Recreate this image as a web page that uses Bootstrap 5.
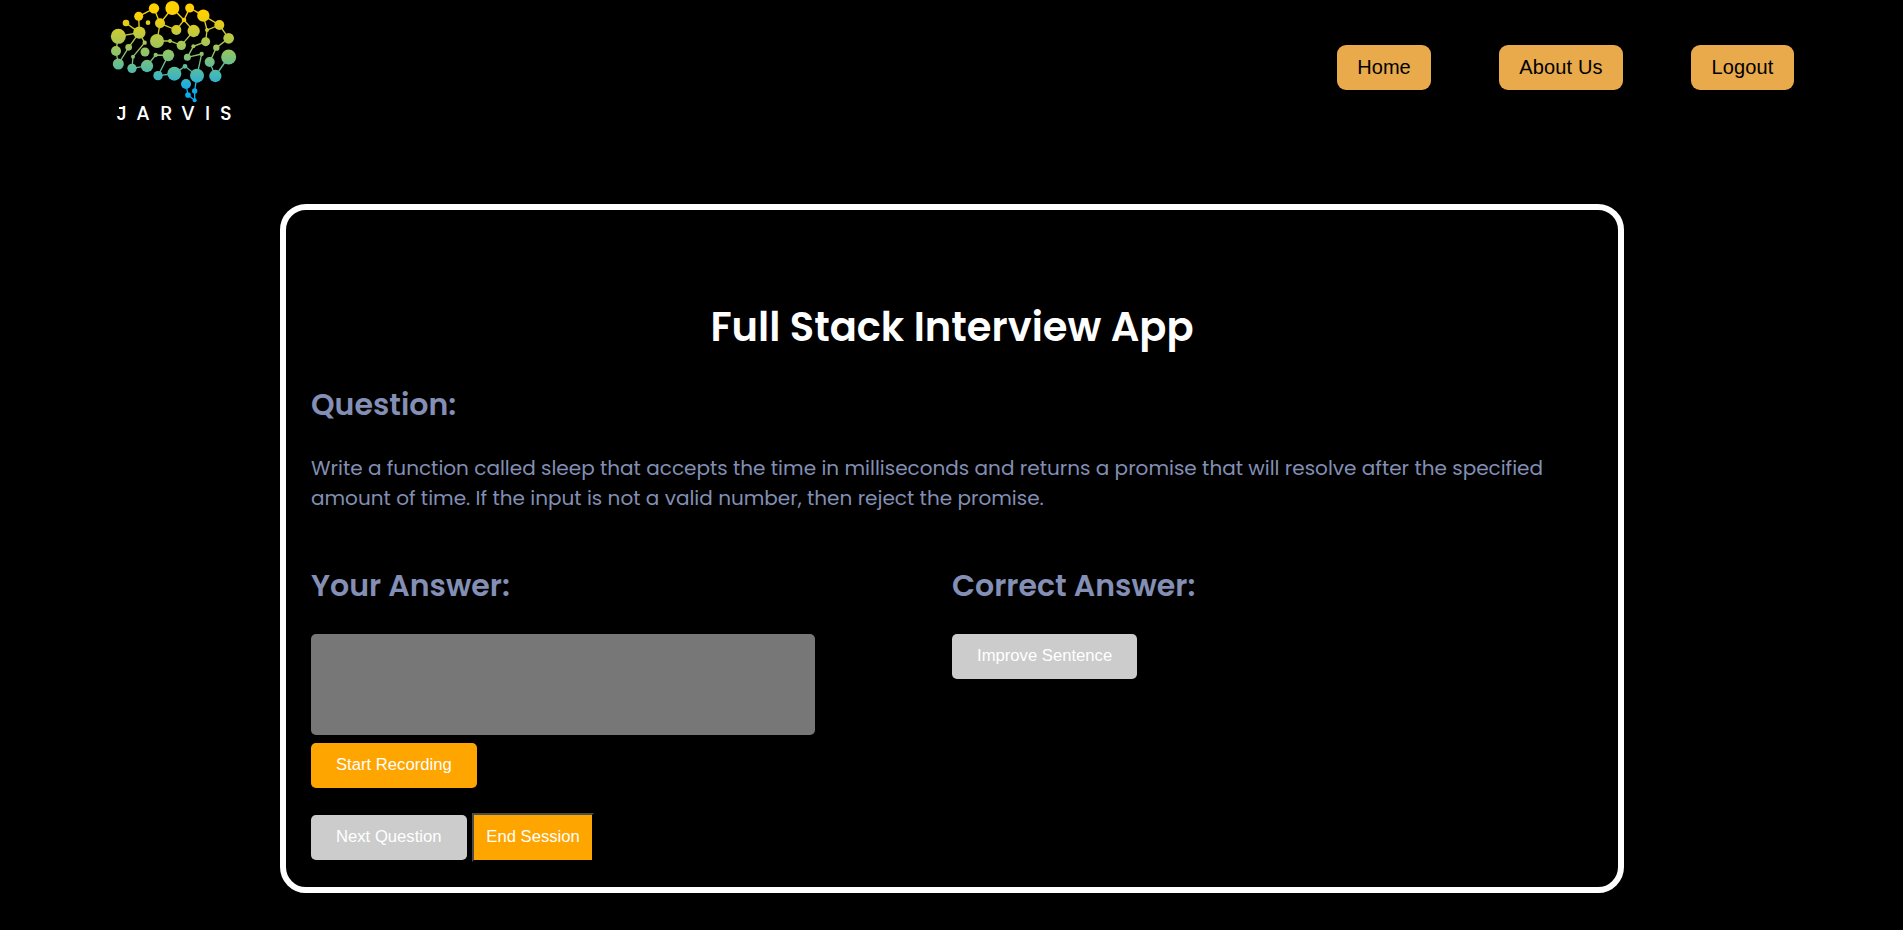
<!DOCTYPE html>
<html lang="en">
<head>
<meta charset="utf-8">
<meta name="viewport" content="width=device-width, initial-scale=1">
<title>Full Stack Interview App</title>
<link href="https://cdn.jsdelivr.net/npm/bootstrap@5.3.0/dist/css/bootstrap.min.css" rel="stylesheet">
<style>
body{background:#000;color:#838fb4;font-family:Poppins,Inter,sans-serif;height:930px;overflow:hidden}
.site-nav{height:134px;padding:0 109px 0 100px}
.brain{width:150px;height:130px;display:block}
.nav-pills-gap{gap:68px;padding-top:45px}
.nav-pill{background:#e8aa4b;color:#000;border-radius:9px;height:45px;width:94px;text-align:center;font:20px/45px "Liberation Sans",sans-serif;display:block;text-decoration:none;white-space:nowrap}
.nav-pill.about{width:124px;letter-spacing:.15px}
.nav-pill.logout{width:103px;letter-spacing:.1px}
.panel{width:1344px;height:689px;margin:70px 0 0 280px;border:6px solid #fff;border-radius:26px;padding:87px 25px 0}
.panel h1{font-size:40px;font-weight:600;line-height:60px;color:#fff;margin:0 0 25px;white-space:nowrap}
.panel h2{font-size:30px;font-weight:600;line-height:45px;margin:0 0 26px;white-space:nowrap}
.question{font-size:20px;line-height:30px;margin-bottom:50px}
.answer-box{width:504px;height:101px;background:#777;border:0;border-radius:5px;resize:none;display:block;margin-bottom:8px}
.act{font:16.667px/18px "Liberation Sans",sans-serif;color:#fff;border:0;border-radius:5px;padding:13px 25px 14px;height:45px;white-space:nowrap;background:#ffa500}
.act.off{background:#ccc}
.act.end{border:2px solid;border-color:#4c4c4c #000 #000 #4c4c4c;border-radius:0;padding:13px 0 14px 1px;height:49px;width:122px;margin-left:5px}
.session{margin-top:25px}
</style>
</head>
<body>
<nav class="site-nav d-flex justify-content-between align-items-start">
<svg class="brain" viewBox="0 0 450 390" role="img" aria-label="Jarvis">
<defs><linearGradient id="g" gradientUnits="userSpaceOnUse" x1="0" y1="0" x2="0" y2="310">
<stop offset=".14" stop-color="#ffd100"/><stop offset=".32" stop-color="#c3c93c"/><stop offset=".53" stop-color="#8ac46c"/><stop offset=".63" stop-color="#65bd93"/><stop offset=".72" stop-color="#48b8b2"/><stop offset=".79" stop-color="#2fb1d0"/><stop offset=".88" stop-color="#08adf0"/></linearGradient></defs>
<path fill="none" stroke="url(#g)" stroke-width="4" d="M78 69L118 98L55 109L48 153L55 192L86 142L118 98L116 49L162 25L180 70L217 24L252 60L269 24L310 47L358 75L321 90L310 47M358 75L386 115L349 143L329 186M118 98L134 128L99 170L96 205L141 198L167 165L205 166L174 227L223 221L255 199L291 227L305 162L262 172L280 139L317 125L321 90M180 70L229 90L252 60L281 93L244 136L210 123L171 123L180 70M386 171L346 228L329 186M291 227L284 272L284 301L264 285L258 252"/>
<g fill="url(#g)"><circle cx="78" cy="69" r="10"/><circle cx="116" cy="49" r="13.500"/><circle cx="144" cy="68" r="7"/><circle cx="162" cy="25" r="15.500"/><circle cx="180" cy="70" r="15"/><circle cx="217" cy="24" r="21"/><circle cx="269" cy="24" r="13.500"/><circle cx="252" cy="60" r="7"/><circle cx="310" cy="47" r="18.500"/><circle cx="358" cy="75" r="15"/><circle cx="321" cy="90" r="6"/><circle cx="386" cy="115" r="16"/><circle cx="317" cy="125" r="13.500"/><circle cx="281" cy="93" r="18.500"/><circle cx="229" cy="90" r="15"/><circle cx="244" cy="136" r="14"/><circle cx="210" cy="123" r="6"/><circle cx="171" cy="123" r="21"/><circle cx="118" cy="98" r="18.500"/><circle cx="55" cy="109" r="22.500"/><circle cx="48" cy="153" r="15"/><circle cx="55" cy="192" r="16.500"/><circle cx="86" cy="142" r="10"/><circle cx="134" cy="128" r="6.500"/><circle cx="135" cy="156" r="13.500"/><circle cx="99" cy="170" r="6"/><circle cx="96" cy="205" r="14"/><circle cx="141" cy="198" r="18.500"/><circle cx="167" cy="165" r="6.500"/><circle cx="205" cy="166" r="17.500"/><circle cx="174" cy="227" r="14"/><circle cx="223" cy="221" r="21"/><circle cx="255" cy="199" r="7"/><circle cx="291" cy="227" r="21"/><circle cx="305" cy="162" r="6.500"/><circle cx="262" cy="172" r="10.500"/><circle cx="280" cy="139" r="6"/><circle cx="349" cy="143" r="9.500"/><circle cx="329" cy="186" r="15"/><circle cx="386" cy="171" r="22.500"/><circle cx="346" cy="228" r="18.500"/><circle cx="258" cy="252" r="15"/><circle cx="284" cy="273" r="8"/><circle cx="264" cy="285" r="8.500"/><circle cx="284" cy="301" r="6"/></g>
<text x="49 109 181 244 315 360" y="360" fill="#fff" font-family="Poppins,Lato,sans-serif" font-weight="500" font-size="58">JARVIS</text>
<path fill="none" stroke="#fff" stroke-width="6" d="M57 324H73"/>
</svg>
<div class="nav-pills-gap d-flex">
<a class="nav-pill" href="#">Home</a><a class="nav-pill about" href="#">About Us</a><a class="nav-pill logout" href="#">Logout</a>
</div>
</nav>
<main class="panel">
<h1 class="text-center">Full Stack Interview App</h1>
<h2>Question:</h2>
<p class="question">Write a function called sleep that accepts the time in milliseconds and returns a promise that will resolve after the specified amount of time. If the input is not a valid number, then reject the promise.</p>
<div class="row gx-0">
<div class="col-6"><h2>Your Answer:</h2><textarea class="answer-box" aria-label="Your answer"></textarea><button class="act d-block">Start Recording</button></div>
<div class="col-6"><h2>Correct Answer:</h2><button class="act off d-block">Improve Sentence</button></div>
</div>
<div class="session d-flex align-items-center"><button class="act off">Next Question</button><button class="act end">End Session</button></div>
</main>
<script src="https://cdn.jsdelivr.net/npm/bootstrap@5.3.0/dist/js/bootstrap.bundle.min.js"></script>
</body>
</html>
